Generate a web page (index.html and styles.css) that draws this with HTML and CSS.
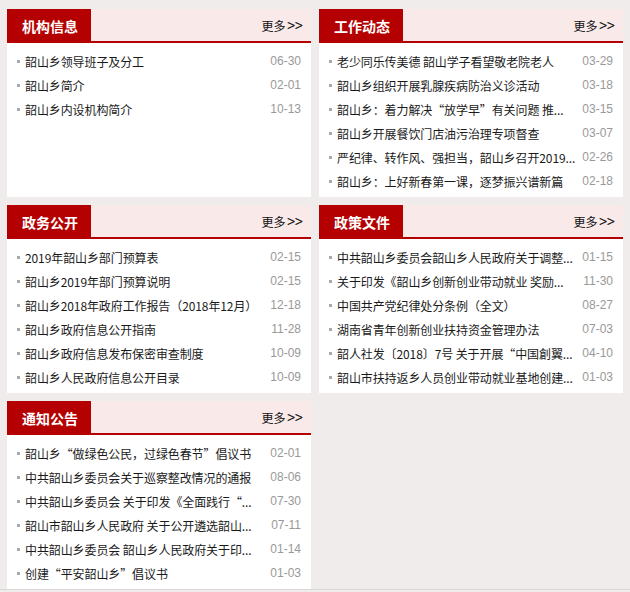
FILE: index.html
```html
<!DOCTYPE html>
<html lang="zh-CN">
<head>
<meta charset="utf-8">
<title>韶山乡</title>
<link rel="stylesheet" href="styles.css">
</head>
<body>
<div class="page">
  <div class="grid">
    <section class="panel">
      <div class="panel-head"><h2 class="panel-title">机构信息</h2><a class="more" href="#">更多<span class="arr">&gt;&gt;</span></a></div>
      <ul class="list">
        <li class="item"><span class="txt">韶山乡领导班子及分工</span><span class="date">06-30</span></li>
        <li class="item"><span class="txt">韶山乡简介</span><span class="date">02-01</span></li>
        <li class="item"><span class="txt">韶山乡内设机构简介</span><span class="date">10-13</span></li>
      </ul>
    </section>
    <section class="panel">
      <div class="panel-head"><h2 class="panel-title">工作动态</h2><a class="more" href="#">更多<span class="arr">&gt;&gt;</span></a></div>
      <ul class="list">
        <li class="item"><span class="txt">老少同乐传美德 韶山学子看望敬老院老人</span><span class="date">03-29</span></li>
        <li class="item"><span class="txt">韶山乡组织开展乳腺疾病防治义诊活动</span><span class="date">03-18</span></li>
        <li class="item"><span class="txt">韶山乡：着力解决“放学早”有关问题 推...</span><span class="date">03-15</span></li>
        <li class="item"><span class="txt">韶山乡开展餐饮门店油污治理专项督查</span><span class="date">03-07</span></li>
        <li class="item"><span class="txt">严纪律、转作风、强担当，韶山乡召开2019...</span><span class="date">02-26</span></li>
        <li class="item"><span class="txt">韶山乡：上好新春第一课，逐梦振兴谱新篇</span><span class="date">02-18</span></li>
      </ul>
    </section>
    <section class="panel">
      <div class="panel-head"><h2 class="panel-title">政务公开</h2><a class="more" href="#">更多<span class="arr">&gt;&gt;</span></a></div>
      <ul class="list">
        <li class="item"><span class="txt">2019年韶山乡部门预算表</span><span class="date">02-15</span></li>
        <li class="item"><span class="txt">韶山乡2019年部门预算说明</span><span class="date">02-15</span></li>
        <li class="item"><span class="txt">韶山乡2018年政府工作报告（2018年12月）</span><span class="date">12-18</span></li>
        <li class="item"><span class="txt">韶山乡政府信息公开指南</span><span class="date">11-28</span></li>
        <li class="item"><span class="txt">韶山乡政府信息发布保密审查制度</span><span class="date">10-09</span></li>
        <li class="item"><span class="txt">韶山乡人民政府信息公开目录</span><span class="date">10-09</span></li>
      </ul>
    </section>
    <section class="panel">
      <div class="panel-head"><h2 class="panel-title">政策文件</h2><a class="more" href="#">更多<span class="arr">&gt;&gt;</span></a></div>
      <ul class="list">
        <li class="item"><span class="txt">中共韶山乡委员会韶山乡人民政府关于调整...</span><span class="date">01-15</span></li>
        <li class="item"><span class="txt">关于印发《韶山乡创新创业带动就业 奖励...</span><span class="date">11-30</span></li>
        <li class="item"><span class="txt">中国共产党纪律处分条例（全文）</span><span class="date">08-27</span></li>
        <li class="item"><span class="txt">湖南省青年创新创业扶持资金管理办法</span><span class="date">07-03</span></li>
        <li class="item"><span class="txt">韶人社发〔2018〕7号 关于开展“中国創翼...</span><span class="date">04-10</span></li>
        <li class="item"><span class="txt">韶山市扶持返乡人员创业带动就业基地创建...</span><span class="date">01-03</span></li>
      </ul>
    </section>
    <section class="panel">
      <div class="panel-head"><h2 class="panel-title">通知公告</h2><a class="more" href="#">更多<span class="arr">&gt;&gt;</span></a></div>
      <ul class="list">
        <li class="item"><span class="txt">韶山乡“做绿色公民，过绿色春节”倡议书</span><span class="date">02-01</span></li>
        <li class="item"><span class="txt">中共韶山乡委员会关于巡察整改情况的通报</span><span class="date">08-06</span></li>
        <li class="item"><span class="txt">中共韶山乡委员会 关于印发《全面践行“...</span><span class="date">07-30</span></li>
        <li class="item"><span class="txt">韶山市韶山乡人民政府 关于公开遴选韶山...</span><span class="date">07-11</span></li>
        <li class="item"><span class="txt">中共韶山乡委员会 韶山乡人民政府关于印...</span><span class="date">01-14</span></li>
        <li class="item"><span class="txt">创建“平安韶山乡”倡议书</span><span class="date">01-03</span></li>
      </ul>
    </section>
  </div>
  <div class="foot-line"></div>
</div>
</body>
</html>
```

FILE: styles.css
```css
* { box-sizing: border-box; }
html, body { margin: 0; padding: 0; }
body {
  background: #f1ecec;
  font-family: "Liberation Sans", "Noto Sans CJK SC", sans-serif;
  font-size: 12px;
  color: #222;
}
.page {
  width: 630px;
  height: 592px;
  padding: 9px 7px 0 7px;
  display: flex;
  flex-direction: column;
}
.grid {
  display: grid;
  grid-template-columns: 304px 304px;
  grid-auto-rows: 188px;
  column-gap: 8px;
  row-gap: 8px;
}
.panel {
  background: #fff;
  display: flex;
  flex-direction: column;
}
.panel-head {
  height: 34px;
  background: #f9e9e9;
  border-bottom: 2px solid #b40000;
  display: flex;
  align-items: stretch;
  justify-content: space-between;
}
.panel-title {
  margin: 0;
  width: 84px;
  background: #b40000;
  color: #fff;
  font-size: 14px;
  font-weight: bold;
  font-family: "Noto Sans CJK SC", sans-serif;
  display: flex;
  align-items: center;
  justify-content: center;
  padding-top: 1px;
  padding-left: 2px;
}
.more {
  color: #111;
  text-decoration: none;
  font-family: "Noto Sans CJK SC", sans-serif;
  font-size: 12px;
  display: flex;
  align-items: center;
  padding-right: 8px;
}
.arr {
  font-family: "DejaVu Sans", sans-serif;
  font-size: 11px;
  letter-spacing: -1.5px;
  margin-left: 1px;
  padding-right: 1px;
  transform: scaleY(1.2);
}
.list {
  list-style: none;
  margin: 0;
  padding: 6px 10px 0 10px;
}
.item {
  height: 24px;
  display: flex;
  align-items: center;
  gap: 5px;
}
.item::before {
  content: "";
  width: 3px;
  height: 3px;
  background: #aaa;
  flex: none;
}
.txt {
  flex: 1;
  min-width: 0;
  white-space: nowrap;
  font-family: "Noto Sans CJK SC", sans-serif;
  color: #1a1a1a;
  font-size: 12px;
  letter-spacing: -0.1px;
}
.date {
  flex: none;
  color: #999;
  font-family: "Liberation Sans", sans-serif;
  font-size: 12px;
  margin-left: 3px;
}
.foot-line {
  margin: auto -7px 2px -7px;
  height: 1px;
  background: #d9d6d6;
}
```
